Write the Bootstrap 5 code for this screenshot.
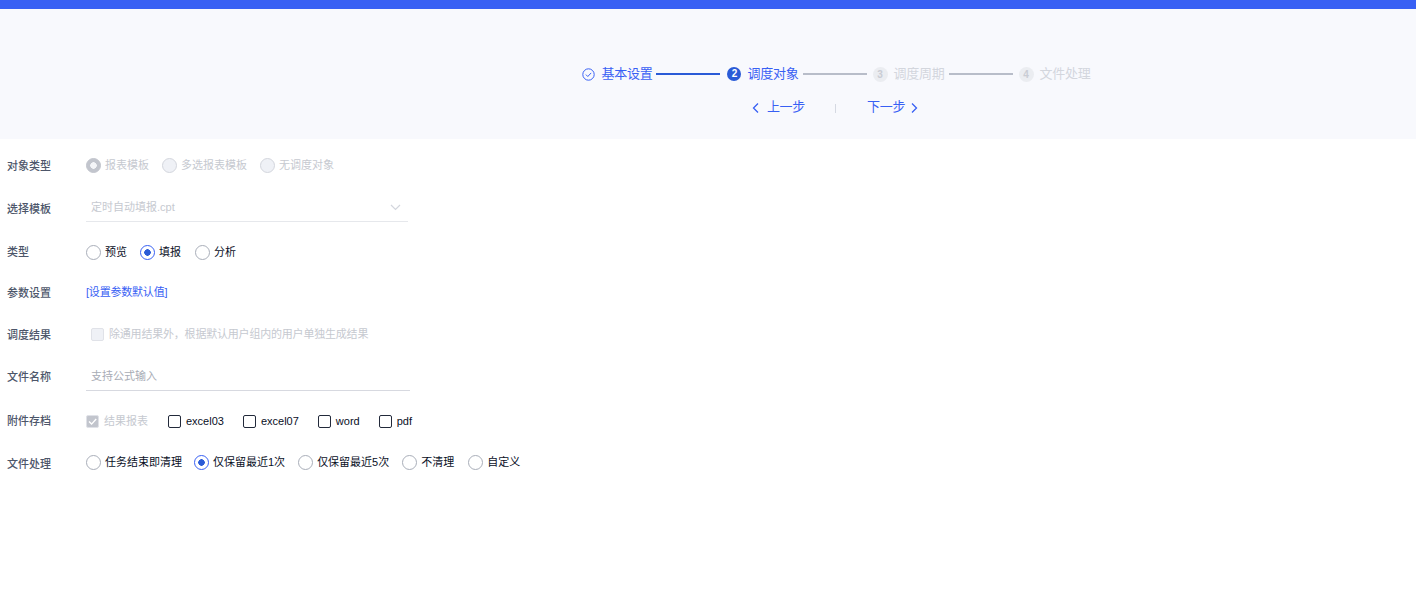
<!DOCTYPE html>
<html lang="zh">
<head>
  <meta charset="UTF-8" />
  <meta name="viewport" content="width=device-width, initial-scale=1" />
  <title>调度对象</title>
  <link href="https://cdn.jsdelivr.net/npm/bootstrap@5.3.0/dist/css/bootstrap.min.css" rel="stylesheet" />
  <style>
    body { font-family: "Liberation Sans", "Noto Sans CJK SC", sans-serif; font-size: 11px; color: #0a0f1f; background: #fff; }
    .top-strip { height: 9px; background: #3860f4; }
    .wizard-head { height: 130px; background: #f8f9fd; padding-left: 254px; padding-top: 56px; }
    .step-row { padding-left: 3px; }
    .step-item { font-size: 13px; line-height: 18px; color: #d3d6dd; gap: 6px; letter-spacing: -.25px; }
    .step-item.on { color: #3860f4; }
    .step-num { width: 15px; height: 15px; border-radius: 50%; background: #ebedf1; color: #c9ccd4; font-size: 10px; font-weight: 700; line-height: 15px; text-align: center; letter-spacing: 0; }
    .step-item.on .step-num { width: 14px; height: 14px; line-height: 14px; background: #2a5bd7; color: #fff; }
    .step-line { width: 64px; height: 2px; background: #b8bdc9; margin: 0 6px 0 4px; }
    .step-line.on { background: #2a5bd7; margin-right: 7px; }
    .wizard-actions { margin-top: 15px; font-size: 13px; line-height: 18px; color: #3860f4; letter-spacing: -.3px; }
    .wizard-actions svg { margin-top: 2px; }
    .wizard-actions .back-icon { margin-right: 8px; }
    .wizard-actions .next-icon { margin-left: 6px; }
    .wizard-actions .sep { width: 1px; height: 9px; background: #d5d9e2; margin: 2px 31px 0 30px; }
    .form-area { padding: 6px 0 0 7px; }
    .form-line { height: 40px; margin-bottom: 3px; }
    .form-line.after-4 { margin-bottom: 4px; }
    .form-line.after-0 { margin-bottom: 0; }
    .form-line.after-2 { margin-bottom: 2px; }
    .form-line.after-1 { margin-bottom: 1px; }
    .field-label { width: 79px; flex: none; color: #4d566a; font-weight: 500; margin: 2px 0 0; line-height: 14px; }
    .field-label.level { margin-top: 0; }
    .field-label.low { margin-top: 4px; }
    .opt { gap: 4px; margin-right: 13px; line-height: 14px; }
    .opt.near-next { margin-right: 12px; }
    .opt.far-next { margin-right: 14px; }
    .opt .form-check-input { width: 15px; height: 15px; margin: 0; flex: none; border: 1px solid #a9aeb9; background-color: #fff; float: none; }
    .opt .form-check-input:checked { border-color: #3860f4; background-color: #fff; background-image: radial-gradient(circle, #2a5bd7 0 3px, transparent 3.5px); }
    .opt .form-check-input[type=checkbox] { width: 13px; height: 13px; border-color: #22293a; border-radius: 2px; }
    .opt.box { gap: 5px; margin-right: 19px; }
    .opt.box.first { margin-right: 20px; }
    .opt.indented { margin-left: 5px; letter-spacing: -.2px; }
    .opt.off { color: #c6c9d0; }
    .opt.off .form-check-input { opacity: 1; background-color: #eff1f6; border-color: #d3d6dd; }
    .opt.off .form-check-input:checked { background-color: #c2c5cd; border-color: #c2c5cd; background-image: radial-gradient(circle, #f4f5f8 0 3px, transparent 3.5px); }
    .opt.off .form-check-input[type=checkbox] { border-color: #e0e2e8; }
    .opt.off .form-check-input[type=checkbox]:checked { background-image: url("data:image/svg+xml,%3csvg xmlns='http://www.w3.org/2000/svg' viewBox='0 0 13 13'%3e%3cpath fill='none' stroke='%23fff' stroke-width='1.4' d='M3 6.5l2.6 2.6L10.2 4'/%3e%3c/svg%3e"); background-size: 13px; }
    .line-field { height: 27px; border-bottom: 1px solid #e6e8ec; padding: 0 7px 0 5px; color: #c6c9d0; }
    .line-field.pick { width: 322px; }
    .line-field.name { width: 324px; border-color: #d7d9e0; }
    .line-field input { border: 0; outline: 0; padding: 0; background: transparent; width: 100%; font-size: 11px; }
    .line-field input::placeholder { color: #a8acb5; }
    .param-link { color: #3860f4; text-decoration: none; letter-spacing: -.2px; }
  </style>
</head>
<body>
  <div class="top-strip"></div>

  <div class="wizard-head">
    <div class="step-row d-flex align-items-center justify-content-center">
      <div class="step-item on d-flex align-items-center">
        <svg width="13" height="13" viewBox="0 0 13 13" fill="none" stroke="#3860f4"><circle cx="6.5" cy="6.5" r="5.7"/><path d="M3.9 6.6l1.9 1.9 3.4-3.6"/></svg>
        <span>基本设置</span>
      </div>
      <div class="step-line on"></div>
      <div class="step-item on d-flex align-items-center">
        <div class="step-num">2</div>
        <span>调度对象</span>
      </div>
      <div class="step-line"></div>
      <div class="step-item d-flex align-items-center">
        <div class="step-num">3</div>
        <span>调度周期</span>
      </div>
      <div class="step-line"></div>
      <div class="step-item d-flex align-items-center">
        <div class="step-num">4</div>
        <span>文件处理</span>
      </div>
    </div>
    <div class="wizard-actions d-flex align-items-center justify-content-center">
      <svg class="back-icon" width="7" height="10" viewBox="0 0 7 10" fill="none" stroke="#3860f4" stroke-width="1.3"><path d="M6 .5L1.5 5 6 9.5"/></svg>
      <span>上一步</span>
      <div class="sep"></div>
      <span>下一步</span>
      <svg class="next-icon" width="7" height="10" viewBox="0 0 7 10" fill="none" stroke="#3860f4" stroke-width="1.3"><path d="M1 .5L5.5 5 1 9.5"/></svg>
    </div>
  </div>

  <form class="form-area">
    <div class="form-line d-flex align-items-center">
      <label class="field-label">对象类型</label>
      <div class="d-flex">
        <div class="opt off d-flex align-items-center"><input class="form-check-input" type="radio" checked disabled><span>报表模板</span></div>
        <div class="opt off d-flex align-items-center"><input class="form-check-input" type="radio" disabled><span>多选报表模板</span></div>
        <div class="opt off d-flex align-items-center"><input class="form-check-input" type="radio" disabled><span>无调度对象</span></div>
      </div>
    </div>
    <div class="form-line after-4 d-flex align-items-center">
      <label class="field-label">选择模板</label>
      <div class="line-field pick d-flex align-items-center justify-content-between">
        <span>定时自动填报.cpt</span>
        <svg width="11" height="7" viewBox="0 0 11 7" fill="none" stroke="#d3d6dd" stroke-width="1.2"><path d="M1 1l4.5 4.5L10 1"/></svg>
      </div>
    </div>
    <div class="form-line after-0 d-flex align-items-center">
      <label class="field-label level">类型</label>
      <div class="d-flex">
        <div class="opt d-flex align-items-center"><input class="form-check-input" type="radio" name="kind"><span>预览</span></div>
        <div class="opt far-next d-flex align-items-center"><input class="form-check-input" type="radio" name="kind" checked><span>填报</span></div>
        <div class="opt d-flex align-items-center"><input class="form-check-input" type="radio" name="kind"><span>分析</span></div>
      </div>
    </div>
    <div class="form-line after-2 d-flex align-items-center">
      <label class="field-label">参数设置</label>
      <a class="param-link" href="#">[设置参数默认值]</a>
    </div>
    <div class="form-line d-flex align-items-center">
      <label class="field-label">调度结果</label>
      <div class="opt off box indented d-flex align-items-center"><input class="form-check-input" type="checkbox" disabled><span>除通用结果外，根据默认用户组内的用户单独生成结果</span></div>
    </div>
    <div class="form-line after-4 d-flex align-items-center">
      <label class="field-label level">文件名称</label>
      <div class="line-field name d-flex align-items-center"><input type="text" placeholder="支持公式输入"></div>
    </div>
    <div class="form-line after-1 d-flex align-items-center">
      <label class="field-label level">附件存档</label>
      <div class="d-flex">
        <div class="opt off box first d-flex align-items-center"><input class="form-check-input" type="checkbox" checked disabled><span>结果报表</span></div>
        <div class="opt box d-flex align-items-center"><input class="form-check-input" type="checkbox"><span>excel03</span></div>
        <div class="opt box d-flex align-items-center"><input class="form-check-input" type="checkbox"><span>excel07</span></div>
        <div class="opt box d-flex align-items-center"><input class="form-check-input" type="checkbox"><span>word</span></div>
        <div class="opt box d-flex align-items-center"><input class="form-check-input" type="checkbox"><span>pdf</span></div>
      </div>
    </div>
    <div class="form-line d-flex align-items-center">
      <label class="field-label low">文件处理</label>
      <div class="d-flex">
        <div class="opt near-next d-flex align-items-center"><input class="form-check-input" type="radio" name="clean"><span>任务结束即清理</span></div>
        <div class="opt d-flex align-items-center"><input class="form-check-input" type="radio" name="clean" checked><span>仅保留最近1次</span></div>
        <div class="opt d-flex align-items-center"><input class="form-check-input" type="radio" name="clean"><span>仅保留最近5次</span></div>
        <div class="opt far-next d-flex align-items-center"><input class="form-check-input" type="radio" name="clean"><span>不清理</span></div>
        <div class="opt d-flex align-items-center"><input class="form-check-input" type="radio" name="clean"><span>自定义</span></div>
      </div>
    </div>
  </form>

  <script src="https://cdn.jsdelivr.net/npm/bootstrap@5.3.0/dist/js/bootstrap.bundle.min.js"></script>
</body>
</html>
